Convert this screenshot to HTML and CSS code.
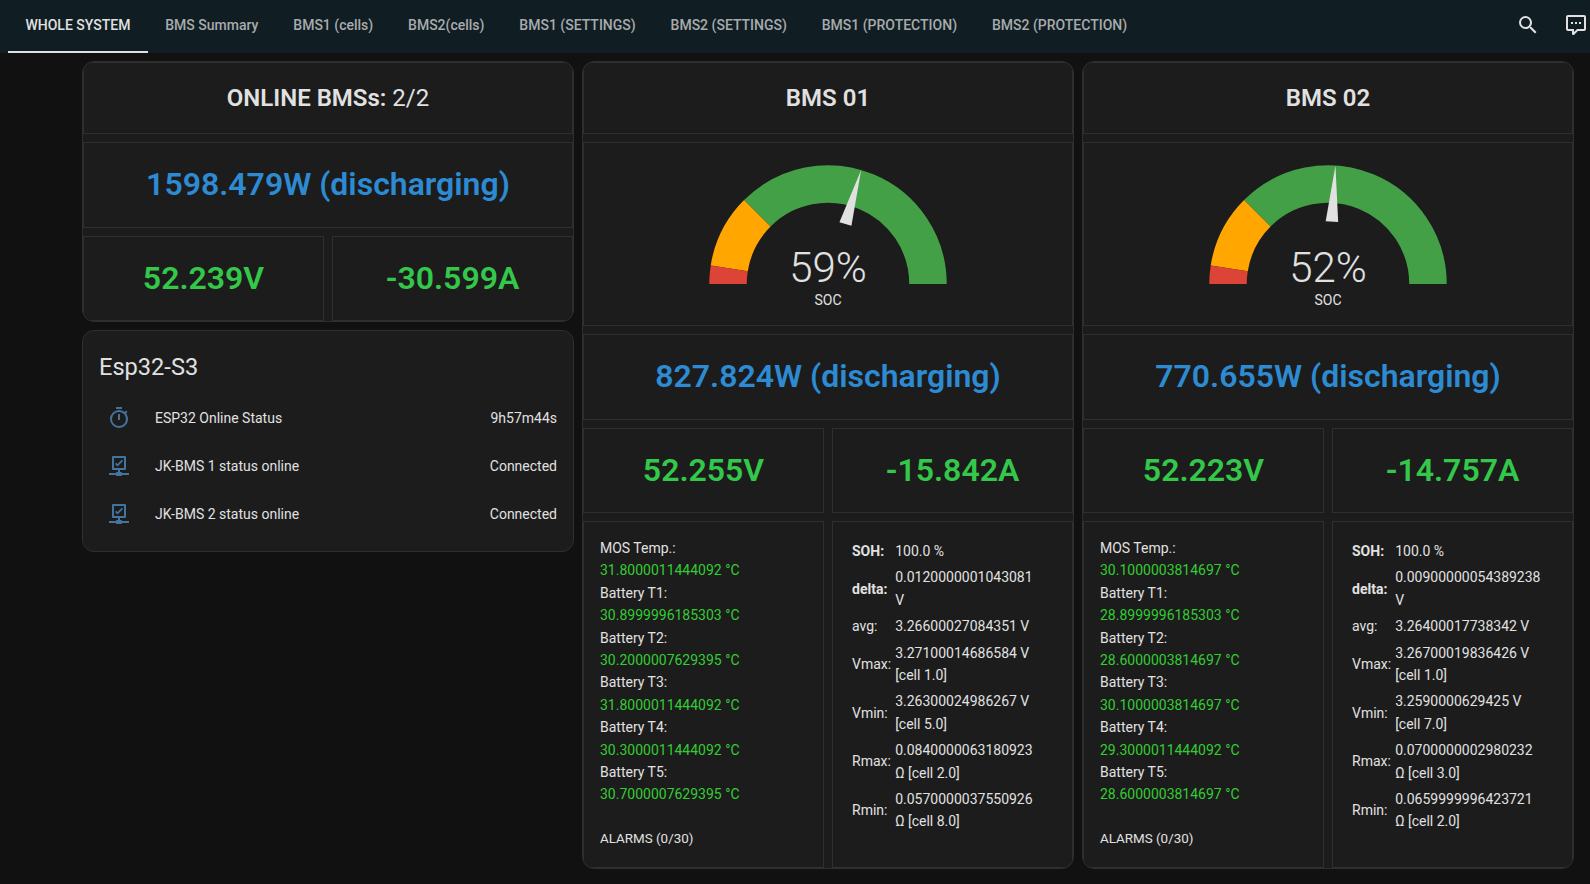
FILE: index.html
```html
<!DOCTYPE html>
<html lang="en">
<head>
    <meta charset="UTF-8">
    <title>Home Assistant - BMS</title>
    <link rel="stylesheet" href="styles.css">
</head>
<body>
    <header class="topbar">
        <nav class="tabs">
            <a class="tab active">WHOLE SYSTEM</a>
            <a class="tab">BMS Summary</a>
            <a class="tab">BMS1 (cells)</a>
            <a class="tab">BMS2(cells)</a>
            <a class="tab">BMS1 (SETTINGS)</a>
            <a class="tab">BMS2 (SETTINGS)</a>
            <a class="tab">BMS1 (PROTECTION)</a>
            <a class="tab">BMS2 (PROTECTION)</a>
        </nav>
        <div class="actions">
            <span class="action"><svg viewBox="0 0 24 24"><path d="M9.5,3A6.5,6.5 0 0,1 16,9.5C16,11.11 15.41,12.59 14.44,13.73L14.71,14H15.5L20.5,19L19,20.5L14,15.5V14.71L13.73,14.44C12.59,15.41 11.11,16 9.5,16A6.5,6.5 0 0,1 3,9.5A6.5,6.5 0 0,1 9.5,3M9.5,5C7,5 5,7 5,9.5C5,12 7,14 9.5,14C12,14 14,12 14,9.5C14,7 12,5 9.5,5Z"/></svg></span>
            <span class="action"><svg viewBox="0 0 24 24"><path d="M9,22A1,1 0 0,1 8,21V18H4A2,2 0 0,1 2,16V4C2,2.89 2.9,2 4,2H20A2,2 0 0,1 22,4V16A2,2 0 0,1 20,18H13.9L10.2,21.71C10,21.9 9.75,22 9.5,22V22H9M10,16V19.08L13.08,16H20V4H4V16H10M17,11H15V9H17V11M13,11H11V9H13V11M9,11H7V9H9V11Z"/></svg></span>
        </div>
    </header>

    <main class="columns">
        <div class="column">
            <section class="stack">
                <div class="cell head"><strong>ONLINE BMSs:</strong>&nbsp;2/2</div>
                <div class="cell power">1598.479W (discharging)</div>
                <div class="pair">
                    <div class="cell stat">52.239V</div>
                    <div class="cell stat">-30.599A</div>
                </div>
            </section>
            <section class="stack entities">
                <h2 class="entities-title">Esp32-S3</h2>
                <div class="entity">
                    <svg class="entity-icon" viewBox="0 0 24 24"><path d="M12,20A7,7 0 0,1 5,13A7,7 0 0,1 12,6A7,7 0 0,1 19,13A7,7 0 0,1 12,20M19.03,7.39L20.45,5.97C20,5.46 19.55,5 19.04,4.56L17.62,6C16.07,4.74 14.12,4 12,4A9,9 0 0,0 3,13A9,9 0 0,0 12,22C17,22 21,17.97 21,13C21,10.88 20.26,8.93 19.03,7.39M11,14H13V8H11M15,1H9V3H15V1Z"/></svg>
                    <span class="entity-name">ESP32 Online Status</span>
                    <span>9h57m44s</span>
                </div>
                <div class="entity">
                    <svg class="entity-icon" viewBox="0 0 24 24"><path d="M6,2H18A1,1 0 0,1 19,3V15A1,1 0 0,1 18,16H13V18H14A1,1 0 0,1 15,19H22V21H15A1,1 0 0,1 14,22H10A1,1 0 0,1 9,21H2V19H9A1,1 0 0,1 10,18H11V16H6A1,1 0 0,1 5,15V3A1,1 0 0,1 6,2M7,4V14H17V4H7M10.5,12.4L8,9.9L9.2,8.7L10.5,10L14.8,5.7L16,6.9L10.5,12.4Z"/></svg>
                    <span class="entity-name">JK-BMS 1 status online</span>
                    <span>Connected</span>
                </div>
                <div class="entity">
                    <svg class="entity-icon" viewBox="0 0 24 24"><path d="M6,2H18A1,1 0 0,1 19,3V15A1,1 0 0,1 18,16H13V18H14A1,1 0 0,1 15,19H22V21H15A1,1 0 0,1 14,22H10A1,1 0 0,1 9,21H2V19H9A1,1 0 0,1 10,18H11V16H6A1,1 0 0,1 5,15V3A1,1 0 0,1 6,2M7,4V14H17V4H7M10.5,12.4L8,9.9L9.2,8.7L10.5,10L14.8,5.7L16,6.9L10.5,12.4Z"/></svg>
                    <span class="entity-name">JK-BMS 2 status online</span>
                    <span>Connected</span>
                </div>
            </section>
        </div>

        <section class="stack">
            <div class="cell head"><strong>BMS 01</strong></div>
            <div class="cell gauge-cell">
                <div class="gauge">
                    <svg class="gauge-arc" viewBox="-50 -50 100 50">
                        <path class="seg-green" d="M-28.28,-28.28A40,40 0 0,1 40,0"/>
                        <path class="seg-orange" d="M-39.51,-6.26A40,40 0 0,1 -28.28,-28.28"/>
                        <path class="seg-red" d="M-40,0A40,40 0 0,1 -39.51,-6.26"/>
                        <path class="needle" transform="rotate(106.2)" d="M-25,-2.5L-47.5,0L-25,2.5Z"/>
                    </svg>
                    <div class="gauge-value">59%</div>
                    <div class="gauge-name">SOC</div>
                </div>
            </div>
            <div class="cell power">827.824W (discharging)</div>
            <div class="pair">
                <div class="cell stat">52.255V</div>
                <div class="cell stat">-15.842A</div>
            </div>
            <div class="pair grow">
                <div class="cell temps">
                    <div>MOS Temp.:</div>
                    <div class="temp">31.8000011444092 °C</div>
                    <div>Battery T1:</div>
                    <div class="temp">30.8999996185303 °C</div>
                    <div>Battery T2:</div>
                    <div class="temp">30.2000007629395 °C</div>
                    <div>Battery T3:</div>
                    <div class="temp">31.8000011444092 °C</div>
                    <div>Battery T4:</div>
                    <div class="temp">30.3000011444092 °C</div>
                    <div>Battery T5:</div>
                    <div class="temp">30.7000007629395 °C</div>
                    <div class="alarms">ALARMS (0/30)</div>
                </div>
                <div class="cell cells">
                    <table>
                        <tr><th>SOH:</th><td>100.0 %</td></tr>
                        <tr><th>delta:</th><td>0.0120000001043081 V</td></tr>
                        <tr><td>avg:</td><td>3.26600027084351 V</td></tr>
                        <tr><td>Vmax:</td><td>3.27100014686584 V [cell 1.0]</td></tr>
                        <tr><td>Vmin:</td><td>3.26300024986267 V [cell 5.0]</td></tr>
                        <tr><td>Rmax:</td><td>0.0840000063180923 Ω [cell 2.0]</td></tr>
                        <tr><td>Rmin:</td><td>0.0570000037550926 Ω [cell 8.0]</td></tr>
                    </table>
                </div>
            </div>
        </section>

        <section class="stack">
            <div class="cell head"><strong>BMS 02</strong></div>
            <div class="cell gauge-cell">
                <div class="gauge">
                    <svg class="gauge-arc" viewBox="-50 -50 100 50">
                        <path class="seg-green" d="M-28.28,-28.28A40,40 0 0,1 40,0"/>
                        <path class="seg-orange" d="M-39.51,-6.26A40,40 0 0,1 -28.28,-28.28"/>
                        <path class="seg-red" d="M-40,0A40,40 0 0,1 -39.51,-6.26"/>
                        <path class="needle" transform="rotate(93.6)" d="M-25,-2.5L-47.5,0L-25,2.5Z"/>
                    </svg>
                    <div class="gauge-value">52%</div>
                    <div class="gauge-name">SOC</div>
                </div>
            </div>
            <div class="cell power">770.655W (discharging)</div>
            <div class="pair">
                <div class="cell stat">52.223V</div>
                <div class="cell stat">-14.757A</div>
            </div>
            <div class="pair grow">
                <div class="cell temps">
                    <div>MOS Temp.:</div>
                    <div class="temp">30.1000003814697 °C</div>
                    <div>Battery T1:</div>
                    <div class="temp">28.8999996185303 °C</div>
                    <div>Battery T2:</div>
                    <div class="temp">28.6000003814697 °C</div>
                    <div>Battery T3:</div>
                    <div class="temp">30.1000003814697 °C</div>
                    <div>Battery T4:</div>
                    <div class="temp">29.3000011444092 °C</div>
                    <div>Battery T5:</div>
                    <div class="temp">28.6000003814697 °C</div>
                    <div class="alarms">ALARMS (0/30)</div>
                </div>
                <div class="cell cells">
                    <table>
                        <tr><th>SOH:</th><td>100.0 %</td></tr>
                        <tr><th>delta:</th><td>0.00900000054389238 V</td></tr>
                        <tr><td>avg:</td><td>3.26400017738342 V</td></tr>
                        <tr><td>Vmax:</td><td>3.26700019836426 V [cell 1.0]</td></tr>
                        <tr><td>Vmin:</td><td>3.2590000629425 V [cell 7.0]</td></tr>
                        <tr><td>Rmax:</td><td>0.0700000002980232 Ω [cell 3.0]</td></tr>
                        <tr><td>Rmin:</td><td>0.0659999996423721 Ω [cell 2.0]</td></tr>
                    </table>
                </div>
            </div>
        </section>
    </main>
</body>
</html>
```

FILE: styles.css
```css
* {
    box-sizing: border-box;
}
body {
    margin: 0;
    overflow: hidden;
    background-color: #111111;
    color: #e1e1e1;
    font-family: Roboto, "Noto Sans", sans-serif;
    font-size: 14px;
}
.topbar {
    display: flex;
    justify-content: space-between;
    height: 53px;
    padding: 0 0 0 8px;
    background-color: #101e24;
}
.tabs {
    display: flex;
}
.tab {
    display: flex;
    align-items: center;
    padding: 0 17.45px 2px;
    border-bottom: 2px solid transparent;
    color: #a8abad;
    font-weight: 500;
}
.tab.active {
    border-bottom-color: #e1e1e1;
    color: #e1e1e1;
}
.actions {
    display: flex;
    margin-right: -10px;
}
.action {
    display: flex;
    align-items: center;
    justify-content: center;
    width: 48px;
    padding-bottom: 3px;
}
.action svg {
    width: 24px;
    height: 24px;
    fill: #e1e1e1;
}
.columns {
    display: grid;
    grid-template-columns: repeat(3, minmax(0, 1fr));
    gap: 8px;
    align-items: start;
    height: 808px;
    margin-top: 8px;
    padding: 0 16px 0 82px;
}
.column {
    display: flex;
    flex-direction: column;
    gap: 8px;
}
.stack {
    display: flex;
    flex-direction: column;
    gap: 8px;
    height: 100%;
    overflow: hidden;
    border: 1px solid #2f2f2f;
    border-radius: 12px;
    background-color: #1c1c1c;
}
.column .stack {
    height: auto;
}
.cell {
    display: flex;
    align-items: center;
    justify-content: center;
    border: 1px solid #2f2f2f;
}
.head {
    height: 72px;
    font-size: 24px;
}
.head strong {
    font-weight: 600;
}
.power {
    height: 86px;
    padding-bottom: 2px;
    color: #2d8bd3;
    font-size: 32px;
    font-weight: 600;
}
.pair {
    display: grid;
    grid-template-columns: repeat(2, minmax(0, 1fr));
    gap: 8px;
}
.grow {
    flex: 1;
}
.stat {
    height: 85px;
    padding-bottom: 2px;
    color: #34c84a;
    font-size: 32px;
    font-weight: 600;
}
.gauge-cell {
    height: 184px;
    align-items: flex-start;
    padding-top: 16px;
}
.gauge {
    position: relative;
    width: 250px;
    height: 150px;
    text-align: center;
}
.gauge-arc {
    display: block;
    width: 250px;
    height: 125px;
}
.gauge-arc path {
    fill: none;
    stroke-width: 15;
}
.seg-green {
    stroke: #43a047;
}
.seg-orange {
    stroke: #ffa600;
}
.seg-red {
    stroke: #db4437;
}
.gauge-arc .needle {
    fill: #e1e1e1;
    stroke: none;
}
.gauge-value {
    position: absolute;
    left: 0;
    right: 0;
    top: 84px;
    font-size: 42px;
    font-weight: 300;
    line-height: 50px;
}
.gauge-name {
    position: absolute;
    left: 0;
    right: 0;
    top: 131px;
    font-size: 14px;
    line-height: 20px;
}
.temps {
    display: block;
    padding: 15px 16px;
    line-height: 22.4px;
}
.temp {
    color: #32cd32;
}
.alarms {
    margin-top: 22px;
    font-size: 13.4px;
}
.cells {
    display: block;
    padding: 15px 34px 15px 16px;
    line-height: 22.4px;
}
.cells th,
.cells td {
    padding: 1px;
    font-weight: 400;
    text-align: left;
}
.cells th {
    font-weight: 700;
}
.entities {
    gap: 0;
    padding: 20px 16px 13px;
}
.entities-title {
    margin: 0 0 11px;
    font-size: 23.6px;
    font-weight: 400;
    line-height: 32px;
}
.entity {
    display: flex;
    align-items: center;
    height: 48px;
}
.entity-icon {
    flex: none;
    width: 24px;
    height: 24px;
    margin: 0 24px 0 8px;
    fill: #44739e;
}
.entity-name {
    flex: 1;
}
```
